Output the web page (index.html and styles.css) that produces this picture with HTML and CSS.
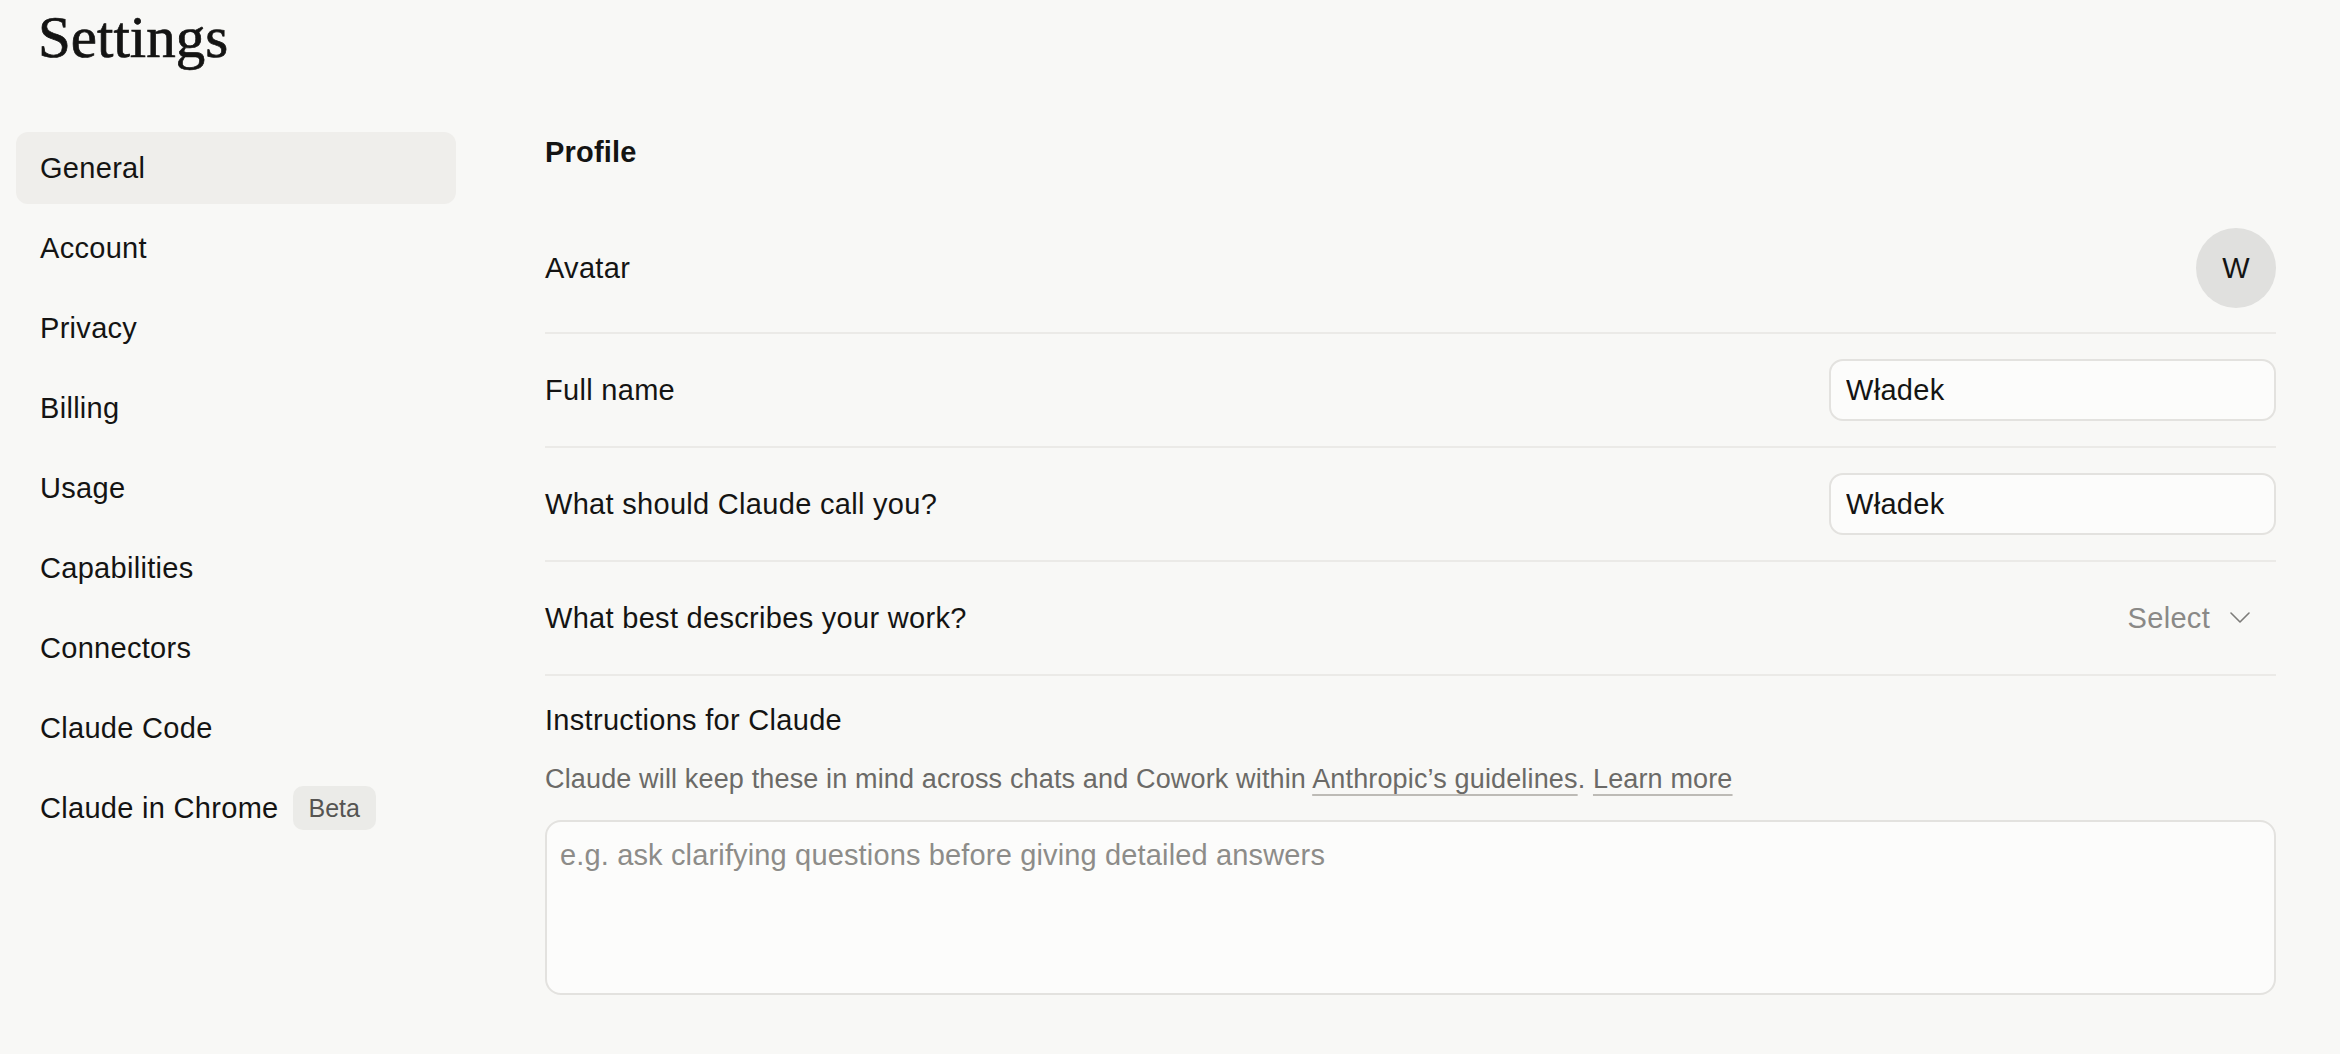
FILE: index.html
```html
<!DOCTYPE html>
<html lang="en">
<head>
    <meta charset="UTF-8">
    <meta name="viewport" content="width=device-width, initial-scale=1.0">
    <title>Settings</title>
    <link rel="stylesheet" href="styles.css">
</head>
<body>
    <div class="page">
        <h1 class="page-title">Settings</h1>

        <div class="layout">
            <!-- Settings navigation -->
            <nav class="side-nav">
                <a class="nav-item active" href="#">General</a>
                <a class="nav-item" href="#">Account</a>
                <a class="nav-item" href="#">Privacy</a>
                <a class="nav-item" href="#">Billing</a>
                <a class="nav-item" href="#">Usage</a>
                <a class="nav-item" href="#">Capabilities</a>
                <a class="nav-item" href="#">Connectors</a>
                <a class="nav-item" href="#">Claude Code</a>
                <a class="nav-item" href="#">Claude in Chrome <span class="badge">Beta</span></a>
            </nav>

            <!-- Profile section -->
            <main class="content">
                <h2 class="section-title">Profile</h2>

                <div class="row row-avatar">
                    <span class="row-label">Avatar</span>
                    <div class="avatar">W</div>
                </div>

                <div class="row">
                    <label class="row-label" for="fullName">Full name</label>
                    <input type="text" id="fullName" class="text-input" value="Władek">
                </div>

                <div class="row">
                    <label class="row-label" for="nickname">What should Claude call you?</label>
                    <input type="text" id="nickname" class="text-input" value="Władek">
                </div>

                <div class="row">
                    <span class="row-label">What best describes your work?</span>
                    <button type="button" class="select-btn">
                        Select
                        <svg width="20" height="12" viewBox="0 0 20 12" fill="none">
                            <polyline points="1,1 10,10 19,1" stroke="#7d7c79" stroke-width="1.6" stroke-linecap="round" stroke-linejoin="round"/>
                        </svg>
                    </button>
                </div>

                <div class="instructions">
                    <label class="row-label" for="instructions">Instructions for Claude</label>
                    <p class="hint">Claude will keep these in mind across chats and Cowork within <a href="#">Anthropic’s guidelines</a>. <a href="#">Learn more</a></p>
                    <textarea id="instructions" class="text-area" placeholder="e.g. ask clarifying questions before giving detailed answers"></textarea>
                </div>
            </main>
        </div>
    </div>
</body>
</html>
```

FILE: styles.css
```css
body {
    margin: 0;
    background-color: #f8f8f6;
    color: #141413;
    font-family: "Liberation Sans", Arial, sans-serif;
    font-size: 29px;
    letter-spacing: 0.3px;
}
.page {
    padding: 0 64px 0 16px;
}
.page-title {
    margin: 0;
    padding: 5px 0 0 22px;
    font-family: "Liberation Serif", "Times New Roman", serif;
    font-weight: normal;
    font-size: 59px;
    line-height: 64px;
    letter-spacing: 0;
    -webkit-text-stroke: 0.7px #141413;
}
.layout {
    display: grid;
    grid-template-columns: 440px 1fr;
    column-gap: 89px;
    margin-top: 63px;
}
.side-nav {
    display: flex;
    flex-direction: column;
    gap: 8px;
}
.nav-item {
    display: flex;
    align-items: center;
    gap: 14px;
    height: 72px;
    padding: 0 24px;
    border-radius: 12px;
    color: #141413;
    text-decoration: none;
}
.nav-item.active {
    background-color: #efeeeb;
}
.badge {
    display: inline-flex;
    align-items: center;
    height: 44px;
    padding: 0 16px;
    border-radius: 10px;
    background-color: #ebebe8;
    color: #555452;
    font-size: 25px;
    letter-spacing: 0;
}
.content {
    min-width: 0;
}
.section-title {
    margin: 0 0 32px;
    font-size: 29px;
    font-weight: bold;
    line-height: 40px;
    letter-spacing: 0.2px;
}
.row {
    display: flex;
    justify-content: space-between;
    align-items: center;
    min-height: 62px;
    padding: 25px 0;
    border-bottom: 2px solid #ebeae7;
}
.row-avatar {
    padding: 24px 0;
}
.row-label {
    line-height: 40px;
}
.avatar {
    width: 80px;
    height: 80px;
    border-radius: 50%;
    background-color: #e0e0de;
    display: flex;
    align-items: center;
    justify-content: center;
    font-size: 29px;
}
.text-input {
    box-sizing: border-box;
    width: 447px;
    height: 62px;
    padding: 0 15px;
    border: 2px solid #e3e2df;
    border-radius: 14px;
    background-color: #fcfcfb;
    color: #141413;
    font-family: inherit;
    font-size: 29px;
    letter-spacing: 0.3px;
    outline: none;
}
.select-btn {
    display: flex;
    align-items: center;
    gap: 20px;
    padding: 0 26px 0 0;
    border: none;
    background: none;
    color: #8a8987;
    font-family: inherit;
    font-size: 29px;
    line-height: 40px;
    letter-spacing: 0.3px;
    cursor: pointer;
}
.instructions {
    display: flex;
    flex-direction: column;
    padding-top: 24px;
}
.hint {
    margin: 21px 0 0;
    color: #6b6a67;
    font-size: 27px;
    line-height: 36px;
    letter-spacing: 0.15px;
}
.hint a {
    color: inherit;
    text-decoration: underline;
    text-decoration-color: #bdbbb6;
    text-decoration-thickness: 2px;
    text-underline-offset: 6px;
}
.text-area {
    box-sizing: border-box;
    height: 175px;
    margin-top: 23px;
    padding: 13px;
    border: 2px solid #e3e2df;
    border-radius: 16px;
    background-color: #fcfcfb;
    color: #141413;
    font-family: inherit;
    font-size: 29px;
    line-height: 40px;
    letter-spacing: 0.15px;
    resize: none;
    outline: none;
}
.text-area::placeholder {
    color: #8d8c89;
}
```
